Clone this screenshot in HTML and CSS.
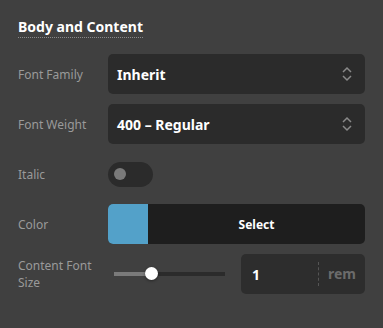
FILE: index.html
```html
<!DOCTYPE html>
<html lang="en">
<head>
  <meta charset="UTF-8" />
  <title>Body and Content</title>
  <link rel="stylesheet" href="styles.css">
</head>
<body>

  <section class="panel">
    <h3 class="panel-title"><span>Body and Content</span></h3>

    <div class="fields">
      <label class="field-label">Font Family</label>
      <div class="select-box">
        <span>Inherit</span>
        <svg class="chevrons" width="12" height="16" viewBox="0 0 12 16">
          <path d="M2 6 L6 2 L10 6 M2 10 L6 14 L10 10" fill="none" stroke="#8a8a8a" stroke-width="1.5"/>
        </svg>
      </div>

      <label class="field-label">Font Weight</label>
      <div class="select-box">
        <span>400 – Regular</span>
        <svg class="chevrons" width="12" height="16" viewBox="0 0 12 16">
          <path d="M2 6 L6 2 L10 6 M2 10 L6 14 L10 10" fill="none" stroke="#8a8a8a" stroke-width="1.5"/>
        </svg>
      </div>

      <label class="field-label">Italic</label>
      <div class="control">
        <span class="toggle"><span class="toggle-knob"></span></span>
      </div>

      <label class="field-label">Color</label>
      <div class="color-picker">
        <span class="swatch"></span>
        <span class="color-select">Select</span>
      </div>

      <label class="field-label">Content Font Size</label>
      <div class="size-control">
        <div class="slider">
          <span class="slider-fill"></span>
          <span class="slider-thumb"></span>
        </div>
        <div class="unit-input">
          <span class="unit-value">1</span>
          <span class="unit-name">rem</span>
        </div>
      </div>
    </div>
  </section>

</body>
</html>
```

FILE: styles.css
```css
* {
  box-sizing: border-box;
}

body {
  margin: 0;
  padding: 0;
  background: #404040;
  font-family: 'Noto Sans', sans-serif;
  color: #fff;
}

.panel {
  width: 383px;
  height: 328px;
  padding: 17px 18px 0 18px;
}

.panel-title {
  margin: 0 0 17px 0;
  font-size: 14px;
  font-weight: 700;
  line-height: 20px;
}

.panel-title span {
  border-bottom: 1px dotted #8a8a8a;
  padding-bottom: 1px;
}

.fields {
  display: grid;
  grid-template-columns: 90px 1fr;
  grid-auto-rows: 40px;
  row-gap: 10px;
}

.field-label {
  display: flex;
  align-items: center;
  font-size: 12px;
  line-height: 17px;
  color: #9a9a9a;
  padding-right: 8px;
}

.select-box {
  display: flex;
  align-items: center;
  justify-content: space-between;
  background: #2b2b2b;
  border-radius: 5px;
  padding: 0 12px 0 9px;
  font-size: 14px;
  font-weight: 700;
}

.control {
  display: flex;
  align-items: center;
}

.toggle {
  width: 45px;
  height: 25px;
  border-radius: 13px;
  background: #2b2b2b;
  display: flex;
  align-items: center;
  padding-left: 6px;
}

.toggle-knob {
  width: 12px;
  height: 12px;
  border-radius: 50%;
  background: #7a7a7a;
}

.color-picker {
  display: flex;
  border-radius: 5px;
  overflow: hidden;
  background: #1e1e1e;
}

.swatch {
  width: 40px;
  background: #53a1c9;
}

.color-select {
  flex: 1;
  display: flex;
  align-items: center;
  justify-content: center;
  font-size: 12px;
  font-weight: 700;
}

.size-control {
  display: flex;
  align-items: center;
  gap: 16px;
  padding-left: 6px;
}

.slider {
  position: relative;
  width: 111px;
  height: 4px;
  background: #2b2b2b;
}

.slider-fill {
  display: block;
  width: 37px;
  height: 100%;
  background: #7a7a7a;
}

.slider-thumb {
  position: absolute;
  left: 31px;
  top: -5px;
  width: 13px;
  height: 13px;
  border-radius: 50%;
  background: #fff;
  box-shadow: 0 1px 3px rgba(0, 0, 0, 0.4);
}

.unit-input {
  flex: 1;
  height: 40px;
  display: flex;
  align-items: center;
  background: #2d2d2d;
  border-radius: 5px;
  padding: 0 9px 0 11px;
}

.unit-value {
  flex: 1;
  font-size: 14px;
  font-weight: 700;
}

.unit-name {
  border-left: 1px dashed #555;
  padding-left: 9px;
  height: 24px;
  line-height: 24px;
  font-size: 14px;
  font-weight: 700;
  color: #6b6b6b;
}
```
